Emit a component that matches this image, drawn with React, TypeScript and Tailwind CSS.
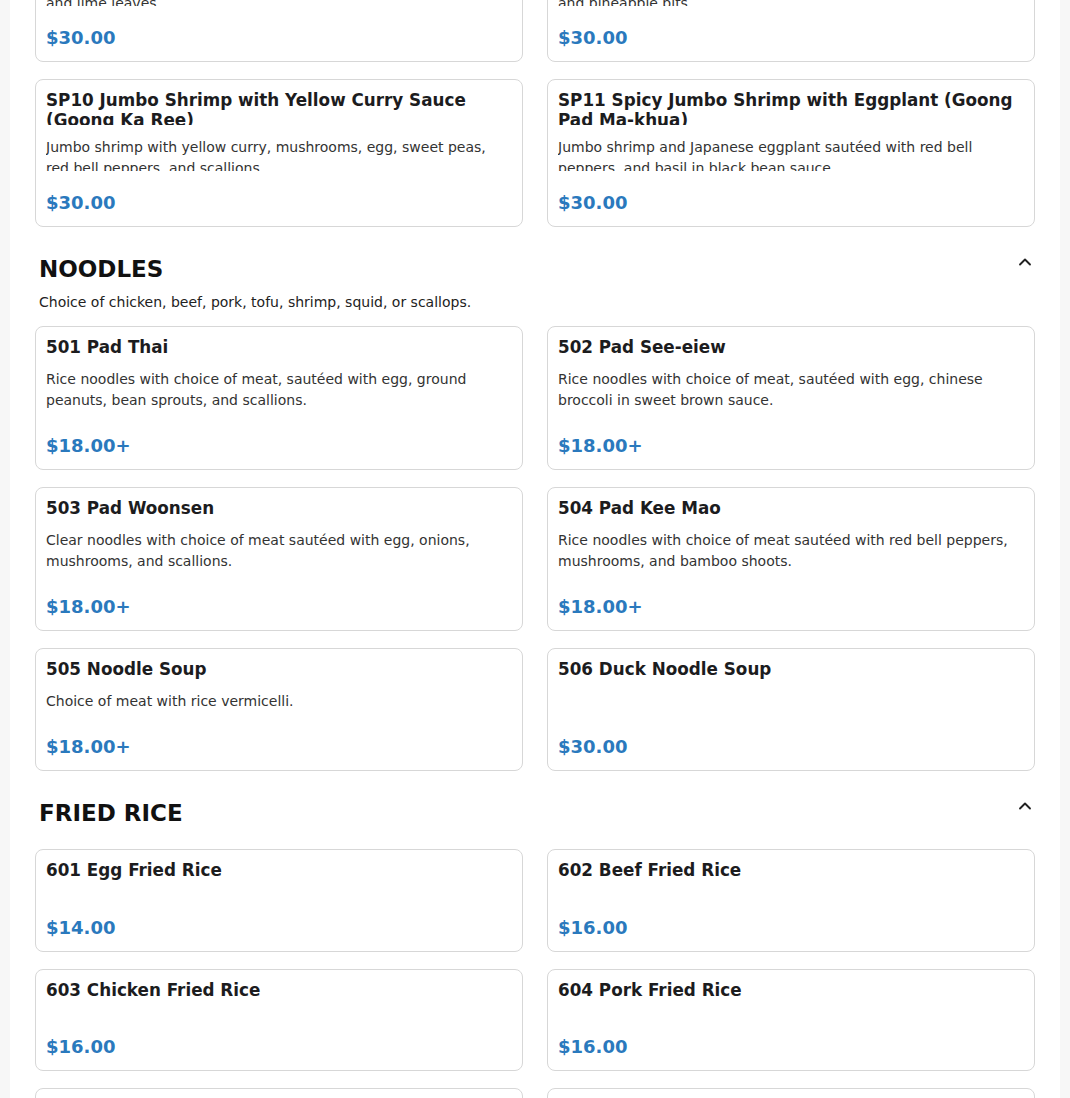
import { ChevronUp } from 'lucide-react'

interface Item {
  name: string
  desc?: string
  price: string
}

interface Section {
  key: string
  title: string
  note?: string
  clamp?: boolean
  items: Item[]
}

const sections: Section[] = [
  {
    key: 'specials',
    title: 'CHEF SPECIALS',
    clamp: true,
    items: [
      {
        name: 'SP08 Jumbo Shrimp with Red Curry (Goong Pad Ped)',
        desc: 'Jumbo shrimp with red curry, bamboo shoots, basil, bell peppers,\nand lime leaves.',
        price: '$30.00',
      },
      {
        name: 'SP09 Jumbo Shrimp with Pineapple Curry (Goong Sapparod)',
        desc: 'Jumbo shrimp in red curry with bell peppers, sweet basil, onions,\nand pineapple bits.',
        price: '$30.00',
      },
      {
        name: 'SP10 Jumbo Shrimp with Yellow Curry Sauce (Goong Ka Ree)',
        desc: 'Jumbo shrimp with yellow curry, mushrooms, egg, sweet peas, red bell peppers, and scallions.',
        price: '$30.00',
      },
      {
        name: 'SP11 Spicy Jumbo Shrimp with Eggplant (Goong Pad Ma-khua)',
        desc: 'Jumbo shrimp and Japanese eggplant sautéed with red bell peppers, and basil in black bean sauce.',
        price: '$30.00',
      },
    ],
  },
  {
    key: 'noodles',
    title: 'NOODLES',
    note: 'Choice of chicken, beef, pork, tofu, shrimp, squid, or scallops.',
    items: [
      { name: '501 Pad Thai', desc: 'Rice noodles with choice of meat, sautéed with egg, ground peanuts, bean sprouts, and scallions.', price: '$18.00+' },
      { name: '502 Pad See-eiew', desc: 'Rice noodles with choice of meat, sautéed with egg, chinese broccoli in sweet brown sauce.', price: '$18.00+' },
      { name: '503 Pad Woonsen', desc: 'Clear noodles with choice of meat sautéed with egg, onions, mushrooms, and scallions.', price: '$18.00+' },
      { name: '504 Pad Kee Mao', desc: 'Rice noodles with choice of meat sautéed with red bell peppers, mushrooms, and bamboo shoots.', price: '$18.00+' },
      { name: '505 Noodle Soup', desc: 'Choice of meat with rice vermicelli.', price: '$18.00+' },
      { name: '506 Duck Noodle Soup', price: '$30.00' },
    ],
  },
  {
    key: 'friedrice',
    title: 'FRIED RICE',
    items: [
      { name: '601 Egg Fried Rice', price: '$14.00' },
      { name: '602 Beef Fried Rice', price: '$16.00' },
      { name: '603 Chicken Fried Rice', price: '$16.00' },
      { name: '604 Pork Fried Rice', price: '$16.00' },
      { name: '605 Shrimp Fried Rice', price: '$18.00' },
      { name: '606 Pineapple Fried Rice', price: '$18.00' },
    ],
  },
]

function MenuCard({ item, clamp }: { item: Item; clamp?: boolean }) {
  return (
    <div className="flex flex-col rounded-lg border border-[#d7d7d7] bg-white p-[10px]">
      <h3 className={`text-[16.8px] font-bold leading-[1.2] text-[#1c1c1e] ${clamp ? 'max-h-[34.5px] overflow-hidden' : ''}`}>
        {item.name}
      </h3>
      <p className={`mt-3 whitespace-pre-line text-sm leading-[21px] text-[#333] ${clamp ? 'max-h-[34.5px] overflow-hidden' : ''}`}>
        {item.desc ?? ''}
      </p>
      <p className={`mt-auto text-lg font-bold leading-[27px] text-[#2a79bd] ${clamp ? 'pt-[18px]' : 'pt-[21px]'}`}>
        {item.price}
      </p>
    </div>
  )
}

export default function App() {
  return (
    <div className="h-[1098px] overflow-hidden bg-[#f7f7f7] font-['DejaVu_Sans',sans-serif]">
      <div className="mx-auto min-h-full max-w-[1050px] bg-white px-[25px]">
        {/* page is shown scrolled part way through the specials */}
        <div className="-mt-[139px] flex flex-col gap-[25px] pb-10">
          {sections.map((s) => (
            <section key={s.key}>
              <div className="flex items-start justify-between">
                <h2 className="pl-1 text-[23px] font-bold leading-[34px] text-[#111]">{s.title}</h2>
                <ChevronUp size={20} strokeWidth={2.25} className="text-[#222]" />
              </div>
              {s.note ? (
                <p className="mb-[13px] mt-[6px] pl-1 text-sm leading-[21px] text-[#222]">{s.note}</p>
              ) : (
                <div className="h-[19px]" />
              )}
              <div className="grid grid-cols-2 gap-x-6 gap-y-[17px]">
                {s.items.map((it) => (
                  <MenuCard key={it.name} item={it} clamp={s.clamp} />
                ))}
              </div>
            </section>
          ))}
        </div>
      </div>
    </div>
  )
}
